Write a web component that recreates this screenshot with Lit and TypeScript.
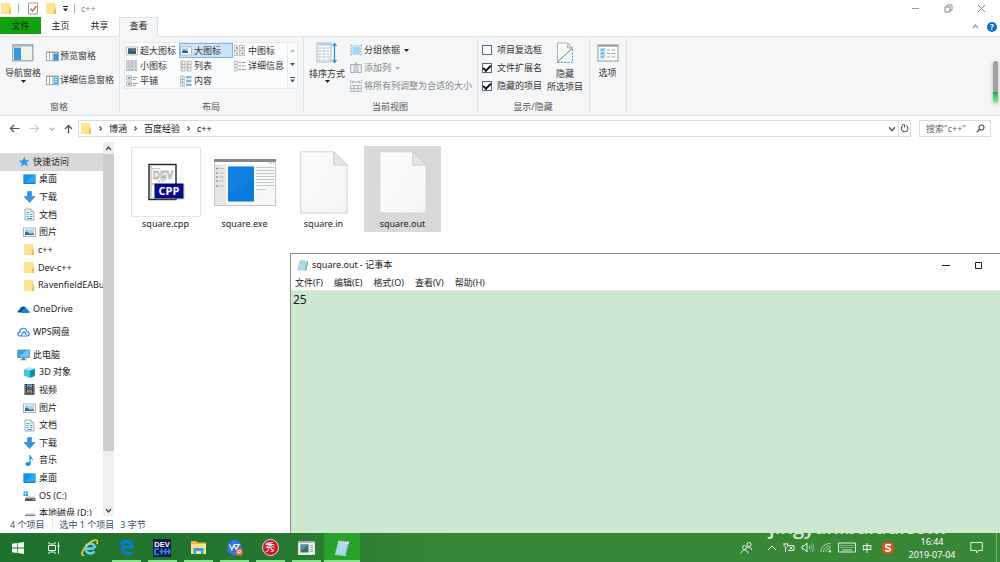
import { LitElement, html, css, svg, TemplateResult } from "lit";
import { customElement, state } from "lit/decorators.js";
import { classMap } from "lit/directives/class-map.js";

const icon = (w: number, h: number, vw: number, vh: number, body: unknown) =>
  html`<svg width=${w} height=${h} viewBox="0 0 ${vw} ${vh}" aria-hidden="true">${body}</svg>`;

const folder = () => icon(12, 13, 12, 13, svg`
  <path d="M1 1h8l1 1v3l1 .5V12H2l-1-.5z" fill="#f6d373"/>
  <path d="M1 1h8v10.2l-6.5.8H1z" fill="#ffe495"/><path d="M9 8l2-1v5H9z" fill="#eebf4c"/>`);

const caret = (color = "#222") => icon(5, 3, 5, 3, svg`<path d="M0 0h5L2.500 3z" fill=${color}/>`);

const chevron = (dir: "up" | "down" | "right", color = "#555", size = 7) => {
  const d = { up: "M1 5l2.500-3L6 5", down: "M1 2l2.500 3L6 2", right: "M2.500 1.500l2 2-2 2" }[dir];
  return icon(size, size, 7, 7, svg`<path d=${d} fill="none" stroke=${color} stroke-width="1.200"/>`);
};

const desktop = () => icon(13, 12, 13, 12, svg`
  <rect x=".8" y="1.800" width="11.400" height="8.600" fill="#1496ee" stroke="#0f86d6" stroke-width=".7"/>
  <path d="M2 10l8-8h2v8z" fill="#2ba9f8"/><path d="M1 10.300h11" stroke="#0a68ad" stroke-width=".8"/>`);
const download = () => icon(13, 12, 13, 12, svg`<path d="M4.500.500h4v5h3.500L6.500 11.500 1 5.500h3.500z" fill="#3a95dc" stroke="#2a7fc5" stroke-width=".6"/>`);
const documentIcon = () => icon(13, 13, 13, 13, svg`
  <path d="M2 1h6l3 3v8H2z" fill="#f7fafc" stroke="#8b979f" stroke-width=".8"/><path d="M8 1v3h3" fill="#dfe5ea" stroke="#8b979f" stroke-width=".6"/>
  <path d="M3.500 4.500h3M3.500 6.500h2M7 6.500h2.500M3.500 8.500h2M7 8.500h2.500M4 10.500h5" stroke="#3f9cd3"/>`);
const picture = () => icon(13, 12, 13, 12, svg`
  <rect x=".5" y="2" width="12" height="8.500" fill="#fff" stroke="#9aa3a9" stroke-width=".8"/>
  <rect x="2" y="3.500" width="9" height="5.500" fill="#a7d2ef"/><path d="M2 6l2-.5L7 8l2-1 2 1v1H2z" fill="#2b6e86"/>`);
const star = () => icon(12, 12, 12, 12, svg`
  <path d="M6.500 1l1.200 3.200 3.600.100L8.600 6.700 10 10.600 6.200 8.500 2.800 10.800 3.800 7 .800 4.700l3.600-.3z" fill="#2f96e0"/>`);
const cloud = () => icon(13, 12, 13, 12, svg`
  <path d="M.500 9.500C.500 7.500 2 7 2.500 6.800 3 3.500 7 2 9.500 5L7 6 4.500 9.500z" fill="#0a4ea0"/>
  <path d="M4.500 10C4 8 5.500 7 6.500 7c1-2.500 4.500-2 4.700.500C13.500 8 13 10 12 10z" fill="#1482d8"/>`);
const wpsCloud = () => icon(13, 12, 13, 12, svg`
  <path d="M3.500 10C.300 10 .200 6.500 2.800 6.200 2.500 1.200 9.500 1 9.800 5.500c3.200.500 3 4.500 0 4.500zM4 9.500l3-4 2.500 3" fill="none" stroke="#3c7cf0" stroke-width="1.200"/>`);
const pc = () => icon(13, 12, 13, 12, svg`
  <rect x=".8" y="1" width="11.500" height="7.500" fill="#28a7f0" stroke="#5c7483" stroke-width=".7"/><path d="M2 8l7-6.500h3V8z" fill="#66c6fb"/>
  <path d="M5 9h3v1.500h2v.8H3v-.8h2z" fill="#71818c"/>`);
const cube = () => icon(13, 13, 13, 13, svg`
  <path d="M1 3.200L6 1l6 1.500-5 2z" fill="#a6ecf5"/><path d="M1 3.200l6 1.300V12l-6-2.200z" fill="#43c2dc"/><path d="M7 4.500l5-2V10l-5 2z" fill="#138fb1"/>`);
const video = () => icon(13, 13, 13, 13, svg`
  <rect x="1.500" y="1" width="10" height="11" fill="#343b43"/><rect x="4" y="1.500" width="5" height="4.700" fill="#7da4d1"/>
  <rect x="4" y="6.800" width="5" height="4.700" fill="#c58845"/><path d="M4 4l2-1 3 2v1H4zM4 10l3-2 2 3H4z" fill="#3d619f"/>
  <path d="M2.700 2v10M10.300 2v10" stroke="#e4e7ea" stroke-width=".9" stroke-dasharray="1 1.200"/>`);
const music = () => icon(13, 13, 13, 13, svg`
  <ellipse cx="5" cy="10" rx="2.600" ry="2" fill="#1593ea"/><path d="M6.400 10V1h1c.3 2.500 3.200 3 2.500 6-.4-1.500-1.300-2-2.300-2.200V10z" fill="#1593ea"/>`);
const drive = (win: boolean) => icon(13, 12, 13, 12, svg`
  ${win ? svg`<path d="M.5 1.500h2v2h-2zM3 1.500h2v2H3zM.5 4h2v2h-2zM3 4h2v2H3z" fill="#19a5e8"/>` : ""}
  <path d="M3 6.500h8.500l1 2H2z" fill="#bfc5c9"/><path d="M2 8.300h10.500V11H2z" fill="#4c5356"/><path d="M9.500 9.700h2" stroke="#63e274"/>`);
const pin = () => icon(9, 9, 9, 9, svg`<path d="M5 .800L8.200 4 7.200 4.400 5.800 6 5.600 7.500 3.700 5.900.800 8.500 3 5.200 1.400 3.400 3 3.200 4.600 1.800z" fill="#8995a0"/>`);

const paneBox = (side: "preview" | "details" | "big") => side === "big"
  ? icon(22, 18, 22, 18, svg`<rect x=".8" y=".8" width="20" height="16" fill="#fff" stroke="#8c979e" stroke-width="1.100"/>
      <path d="M1 2h20" stroke="#8c979e"/><path d="M2 3.500h7V16H2z" fill="#3997dd"/><path d="M10 3.500h10V16H10z" fill="#eef0f2"/>`)
  : icon(13, 11, 13, 11, svg`<rect x=".6" y="1" width="11.800" height="8.800" fill="#fff" stroke="#8b969d" stroke-width=".8"/>
      <path d="M.5 1.500h12M3.500 2v8M7 2v8" stroke="#8b969d" stroke-width=".8"/><rect x="7.500" y="2.500" width="4.500" height="7" fill=${side === "preview" ? "#3997dd" : "#5eb1ea"}/>
      ${side === "details" ? svg`<path d="M8.500 4.500h2.500M8.500 6.500h2.500" stroke="#fff" stroke-width=".8"/>` : ""}`);

const dots = (n: number) => {
  const colors = ["#bb6a4a", "#4d87b5", "#5d9c5a", "#c09a3c"];
  const step = 11 / n;
  return icon(12, 12, 12, 12, svg`${Array.from({ length: n * n }, (_, i) => {
    const x = (i % n) * step + 0.5, y = Math.floor(i / n) * step + 0.5;
    return svg`<rect x=${x} y=${y} width=${step - 0.8} height=${step - 0.8} fill="#fff" stroke="#a4a9ac" stroke-width=".6"/>
      <rect x=${x + step / 3.5} y=${y + step / 3.5} width=${step / 3} height=${step / 3} fill=${colors[(i + Math.floor(i / n)) % 4]}/>`;
  })}`);
};
const thumb = (big: boolean) => icon(12, 12, 12, 12, svg`<rect x=".6" y="2" width="10.800" height="8" fill="#fff" stroke="#9da5aa" stroke-width=".7"/>
  ${big ? svg`<rect x="2" y="3.200" width="8" height="5.600" fill="#3567a8"/><path d="M2 8.800l3-3 2 1.500 3-1v2.500z" fill="#375f37"/><circle cx="7.500" cy="5" r="1.300" fill="#cf5842"/>`
    : svg`<rect x="2" y="3.500" width="6" height="4" fill="#92c5e5"/><path d="M2 7l2-2 4 1.500V8H2z" fill="#25638a"/>`}`);
const rows = (kind: "list" | "details" | "tiles" | "content") => {
  if (kind === "list") return icon(12, 12, 12, 12, svg`<path d="M1 1h4v10H1zM7 1h4v10H7zM1 4.500h4M1 7.500h4M7 4.500h4M7 7.500h4" fill="#fff" stroke="#9ba3a8" stroke-width=".8"/>
    <path d="M2 3h1M2 6h1M2 9h1M8 3h1M8 6h1M8 9h1" stroke="#c07157"/>`);
  if (kind === "details") return icon(12, 12, 12, 12, svg`<path d="M.7 1h2.500v10H.7zM.7 4.500h2.500M.7 7.500h2.500" fill="#fff" stroke="#9ba3a8" stroke-width=".7"/>
    <path d="M4.500 2.500H7M8 2.500h3.500M4.500 6H7M8 6h3.500M4.500 9.500H7M8 9.500h3.500" stroke="#8d98a0"/>`);
  if (kind === "tiles") return icon(12, 12, 12, 12, svg`<path d="M.7 1h5v4h-5zM.7 7h5v4h-5z" fill="#fff" stroke="#98a1a7" stroke-width=".8"/>
    <path d="M2 3h2.500" stroke="#3486bd" stroke-width="1.400"/><path d="M2 9h2.500" stroke="#b6654b" stroke-width="1.400"/><path d="M7 2.500h4.500M7 4.500h2.500M7 8.500h4.500M7 10.500h2.500" stroke="#89949b" stroke-width=".9"/>`);
  return icon(12, 12, 12, 12, svg`<path d="M.7 1h3.500v10H.7zM.7 4.500h3.500M.7 7.500h3.500" fill="#fff" stroke="#98a1a7" stroke-width=".8"/>
    <path d="M2 3h1M2 6h1M2 9h1" stroke="#bd7250"/><path d="M6 2h5.500M6 6h5.500M6 10h5.500" stroke="#5a9ce0" stroke-width="1.400"/><path d="M6 4h5.500M6 8h5.500" stroke="#b8c9d6" stroke-width=".8"/>`);
};
const sortIcon = () => icon(22, 22, 22, 22, svg`<rect x="1" y="1" width="14" height="19" fill="#fff" stroke="#a9b0b5" stroke-width=".9"/>
  <path d="M1.500 1.500h13v2h-13z" fill="#a9cfe6"/><path d="M2 6h12M2 9h12M2 12h12M2 15h12M2 18h12" stroke="#98b9ce" stroke-width="1.200" stroke-dasharray="3.300 1"/>
  <path d="M18.500 2v18M16.500 4l2-2.500 2 2.500M16.500 18l2 2.500 2-2.500" stroke="#2a85cc" stroke-width="1.200" fill="none"/>`);
const groupIcon = () => icon(12, 12, 12, 12, svg`<rect x="2.500" y="2.500" width="7.500" height="7.500" fill="#9ed6f7"/><path d="M1 .5v11M11 .5v11" stroke="#8f999f" stroke-dasharray="2 1"/><path d="M2 1.500h8M2 10.500h8" stroke="#c4d6e0" stroke-width=".8"/>`);
const addCol = () => icon(12, 12, 12, 12, svg`<path d="M.7 2.500h10.600v8H.7zM4.200 2.500v8M7.800 2.500v8" fill="#eef1f5" stroke="#a6aebc"/><path d="M4.500 2.500h3v8h-3z" fill="#c5cfdf"/><path d="M6 0v3" stroke="#8391a6"/>`);
const fitCol = () => icon(12, 12, 12, 12, svg`<path d="M.7 5.500h10.600v6H.7zM4 5.500v6M8 5.500v6M.7 8.500h10.600" fill="#eef1f5" stroke="#a2abb9" stroke-width=".8"/><path d="M.7 0v4M11.300 0v4M2 2h8M3.500.7L2 2l1.500 1.300M8.500.7L10 2 8.500 3.300" fill="none" stroke="#9aa6b6" stroke-width=".8"/>`);
const hideIcon = () => icon(18, 22, 18, 22, svg`<path d="M1.500 1h10l5 5v0L1.500 20z" fill="#f9fafa" stroke="#a6abad" stroke-width=".9"/><path d="M11.500 1v5h5z" fill="#dfe2e4" stroke="#a6abad" stroke-width=".8"/>
  <path d="M1.500 20.500h15V6" fill="none" stroke="#4697ce" stroke-dasharray="2 1.300"/><path d="M1.500 20L16.500 6" stroke="#7d8588" stroke-width=".9"/>`);
const optionsIcon = () => icon(22, 18, 22, 18, svg`<rect x="1" y="1" width="20" height="16" fill="#fff" stroke="#8d969c"/><path d="M1 1.800h20" stroke="#8d969c" stroke-width="1.500"/>
  <rect x="3" y="4" width="5.500" height="11" fill="#bde2f7"/><path d="M4 5.500l1 1 2-2M4 9l1 1 2-2M4 12.500l1 1 2-2" fill="none" stroke="#277fc1" stroke-width=".9"/><path d="M10 6h3m1.500 0h4M10 9.500h3m1.500 0h4M10 13h3m1.500 0h4" stroke="#a1a9ae"/>`);

const cppFile = () => icon(68, 68, 68, 68, svg`<rect x="17" y="16.500" width="27" height="35" fill="#fff" stroke="#222" stroke-width="1.400"/>
  <path d="M19 18v32h24" fill="none" stroke="#cbcbcb" stroke-width="1.600"/>
  <path d="M20 20.500h8" stroke="#aaa" stroke-dasharray="1.500 .8"/><text x="31" y="31" text-anchor="middle" font-family="Liberation Sans" font-size="10" font-weight="700" fill="#f6f6f6" stroke="#7c7c7c" stroke-width=".45">DEV</text>
  <path d="M26 33h7M20 36h4" stroke="#999" stroke-dasharray="2 1"/><rect x="23" y="36" width="28" height="14" fill="#0b0b93" stroke="#05055a"/>
  <path d="M24 50.800h27.800V37" stroke="#777" stroke-width=".8" fill="none"/><text x="37" y="47" text-anchor="middle" font-family="Open Sans" font-size="11" font-weight="700" fill="#fff">CPP</text>`);
const exeFile = () => icon(62, 47, 62, 47, svg`<rect x=".5" y=".5" width="61" height="46" fill="#f7f8f8" stroke="#c4c7c9"/><path d="M0 0h62v3H0z" fill="#83898d"/><path d="M1 3h60v2.500H1z" fill="#fff"/>
  <path d="M1 5.500h11V46H1z" fill="#e5e6e8"/><path d="M55 4h1m1 0h1m1 0h1" stroke="#888"/>
  <path d="M2 9.500h2M2 14h2M2 18h2M2 22h2M2 27h2" stroke="#8d9397" stroke-width="1.500"/><path d="M5 9.500h5M5 14h5M5 18h5M5 22h5M5 27h5" stroke="#bbbfc2" stroke-width=".9"/>
  <rect x="14" y="7.500" width="26" height="35" fill="#087bda"/><path d="M14 7.500h26V22L14 34z" fill="#228be0" opacity=".3"/>
  <path d="M42 8.500h18M42 11.500h18M42 14.500h18M42 17.500h18M42 20.500h18M42 23.500h18M42 26.500h18M42 30.500h10" stroke="#c4c7c9" stroke-width="1"/>`);
const blankFile = () => icon(48, 63, 48, 63, svg`<defs><linearGradient id="paper" x2="1" y2="1"><stop stop-color="#fbfbfb"/><stop offset="1" stop-color="#f3f5f6"/></linearGradient></defs>
  <path d="M.8.8h33L47.200 14v48H.8z" fill="url(#paper)" stroke="#cfd2d4" stroke-width="1"/><path d="M33.800.8V14h13.400z" fill="#e3e5e6" stroke="#c5c8ca" stroke-width=".9"/>`);
const notepadIcon = (s: number) => icon(s, s, 16, 16, svg`<path d="M5 1.500l9.500 1-3 12-10-1z" fill="#8cc8da"/><path d="M5 1.500l9.500 1-.6 2-9.500-1z" fill="#dfe9ec"/><path d="M4.500 4l8 .7-2 8.800-8-.8z" fill="#aadbe8"/>
  <path d="M14.500 2.500l.5 1-2.500 11-1-.2z" fill="#537783"/><path d="M1.500 13.500l10 1 .5.6-10-.8z" fill="#e9f2f3"/><path d="M5.500 2.500h7" stroke="#5e7279" stroke-dasharray="1 1" stroke-width=".8"/>`);

interface App { name: string; glyph: TemplateResult; running?: boolean; active?: boolean }
const apps: App[] = [
  { name: "开始", glyph: icon(14, 14, 14, 14, svg`<path d="M1 2.800l5-.8v4.600H1zM6.700 1.900L13 1v5.600H6.700zM1 7.400h5V12l-5-.8zM6.700 7.400H13V13l-6.300-.9z" fill="#f4faf4"/>`) },
  { name: "任务视图", glyph: icon(14, 14, 14, 14, svg`<path d="M2 1v2h6V1M2 13v-2h6v2M1.500 4.500h7v5h-7zM11.500 1v12" fill="none" stroke="#e3f0e4"/><path d="M10.500 4h2v2h-2z" fill="#e3f0e4"/>`) },
  { name: "Internet Explorer", glyph: icon(18, 18, 18, 18, svg`<path d="M4.800 9.700H13M13.400 12.200A4.900 4.900 0 1 1 14.200 9.200" fill="none" stroke="#64c9f3" stroke-width="2.700"/><path d="M3 16c-3 1.500-2.500-2.500-.5-5.500C5 6 10.500 1.500 14 1c3-.3 2.800 2 1.800 4.200" fill="none" stroke="#f3cf41" stroke-width="1.500"/>`) },
  { name: "Microsoft Edge", running: true, glyph: icon(17, 17, 17, 17, svg`<path d="M1 8C1.500 2.500 5 .8 8.800.8c5 0 7.200 3.700 7 8.700H5.800c0 4 5.500 4.500 9 2.500v3.200c-4.800 2.400-11.600.8-11.600-5.500 0-3 1.700-4.700 3.600-5.500C4.400 4.500 2.300 5.700 1 8zm5-.9h5.500c0-3.700-4.700-3.600-5.500 0z" fill="#087bd2"/>`) },
  { name: "Dev-C++", running: true, glyph: icon(18, 18, 18, 18, svg`<rect width="18" height="18" fill="#121a4d"/><text x="9" y="7.500" text-anchor="middle" font-family="Liberation Sans" font-weight="700" font-size="7.500" fill="#fff">DEV</text><path d="M6 10H2v5.500h4M8.500 9.500v6M12.500 9.500v6M6.500 12.500h8M16 9.500v6M14 12.500h4" fill="none" stroke="#2885ea" stroke-width="1.700"/>`) },
  { name: "文件资源管理器", running: true, glyph: icon(17, 15, 17, 15, svg`<path d="M1 1h5l1.500 1.500H16V14H1z" fill="#eeb94c"/><path d="M1 4h15v10H1z" fill="#fce18c"/><path d="M3.500 14V8h10v6h-2.500v-3H6v3z" fill="#36a2e5"/>`) },
  { name: "WPS", running: true, glyph: icon(17, 17, 17, 17, svg`<path d="M8.500.5l6.500 4v8l-6.500 4-6.500-4v-8z" fill="#3275eb" stroke="#3275eb" stroke-linejoin="round"/><path d="M3.500 5.500l2.300 5L8 6l2.200 4.500 3-5H8" fill="none" stroke="#fff" stroke-width="1.200"/><rect x="10" y="10" width="6.500" height="6.500" rx="1" fill="#f06b3b"/><path d="M12 15v-3.500h2.500v2H12" fill="none" stroke="#fff" stroke-width=".8"/>`) },
  { name: "美图秀秀", running: true, glyph: html`<span class="seal">秀</span>` },
  { name: "程序", running: true, glyph: icon(17, 14, 17, 14, svg`<rect x=".5" y=".5" width="16" height="13" fill="#eef1f1" stroke="#dce0e0"/><path d="M0 1h17" stroke="#9ba3a5" stroke-width="1.500"/><path d="M2.500 3.500h8v8h-8z" fill="#39725f"/><path d="M2.500 3.500h8l-8 7z" fill="#58939c"/><path d="M12 4.500h3M12 6.500h3M12 8.500h3M12 10.500h3" stroke="#8f9a9c" stroke-width=".8"/>`) },
  { name: "记事本", running: true, active: true, glyph: notepadIcon(18) },
];

const quick: [string, TemplateResult, boolean][] = [
  ["桌面", desktop(), true], ["下载", download(), true], ["文档", documentIcon(), true], ["图片", picture(), true],
  ["c++", folder(), false], ["Dev-c++", folder(), false], ["RavenfieldEABuild", folder(), false],
];
const computer: [string, TemplateResult][] = [
  ["3D 对象", cube()], ["视频", video()], ["图片", picture()], ["文档", documentIcon()], ["下载", download()],
  ["音乐", music()], ["桌面", desktop()], ["OS (C:)", drive(true)], ["本地磁盘 (D:)", drive(false)],
];
const layouts: [string, TemplateResult][] = [
  ["超大图标", thumb(true)], ["大图标", thumb(false)], ["中图标", dots(2)],
  ["小图标", dots(3)], ["列表", rows("list")], ["详细信息", rows("details")],
  ["平铺", rows("tiles")], ["内容", rows("content")],
];

@customElement("app-root")
export class AppRoot extends LitElement {
  @state() private layout = "大图标";
  @state() private selected = "square.out";

  static styles = css`
    :host { display: flex; flex-direction: column; position: relative; height: 100vh; overflow: hidden; background: #fff; color: #1c1c1c;
      font: 9px/12px "Noto Sans", "Noto Sans CJK SC", sans-serif; }
    * { box-sizing: border-box; }
    svg { display: block; flex: none; }
    button, input, textarea { font: inherit; color: inherit; margin: 0; padding: 0; border: 0; background: none; border-radius: 0; }
    button { white-space: nowrap; }
    a { color: inherit; text-decoration: none; }
    .title { display: flex; align-items: center; height: 17px; color: #8a8a8a; }
    .quickbar { display: flex; align-items: center; gap: 6px; flex: 1; }
    .quickbar button { display: flex; }
    .quickbar .lead { margin-left: 2px; }
    .bar { width: 1px; height: 9px; background: #b5b5b5; }
    .winctl { display: flex; }
    .winctl button { width: 33px; height: 15px; display: grid; place-items: center; }
    .title .winctl { padding-right: 2px; }
    .tabs { display: flex; align-items: center; height: 20px; border-bottom: 1px solid #dfe1e3; }
    .tabs button { height: 17px; width: 39px; align-self: flex-start; }
    .tabs .file { width: 41px; background: #13a10e; color: #062c05; }
    .tabs .current { height: 20px; border: 1px solid #dfe1e3; border-bottom: 0; background: #f5f6f7; padding-bottom: 3px; }
    .grow { flex: 1; }
    .tabs .round { display: grid; place-items: center; width: 10px; height: 10px; margin: 0 3px 0 8px; align-self: center; border-radius: 50%; background: #0a6fc9; color: #fff; font-weight: 700; font-size: 8px; line-height: 10px; }
    .tabs .fold { width: 8px; display: grid; place-items: center; align-self: center; }
    .ribbon { position: relative; display: flex; height: 79px; background: #f5f6f7; border-bottom: 1px solid #dfe1e3; color: #333; }
    .group { display: flex; flex-direction: column; justify-content: space-between; margin: 1px 0 2px; padding: 4px 5px 0 4px; border-right: 1px solid #e0e2e4; }
    .body { display: flex; gap: 4px; }
    .caption { text-align: center; color: #555; }
    .big { display: flex; flex-direction: column; align-items: center; width: 38px; padding-top: 2px; line-height: 13px; gap: 4px; }
    .big.tall { padding-top: 0; gap: 3px; }
    .big span + svg { margin-top: -3px; }
    .options .big { width: 27px; }
    .stack { display: flex; flex-direction: column; gap: 6px; padding-top: 2px; }
    .stack.two { gap: 12px; padding-top: 8px; }
    .stack.two button { gap: 1px; }
    .stack button, .stack label { display: flex; align-items: center; gap: 2px; height: 12px; }
    .stack button > span + svg { margin-left: 2px; }
    .stack.checks { width: 60px; }
    .stack.checks label { gap: 5px; white-space: nowrap; }
    .off { color: #83878b; }
    input[type="checkbox"] { appearance: none; width: 10px; height: 10px; border: 1px solid #52688b; background: #fff; flex: none; }
    input[type="checkbox"]:checked { display: grid; place-items: center; }
    input[type="checkbox"]:checked::before { content: ""; width: 6px; height: 3px; border: solid #111; border-width: 0 0 2px 2px; transform: rotate(-45deg); margin-bottom: 2px; }
    .gallery { display: flex; border: 1px solid #e6e9ec; background: #fbfcfd; }
    .cells { display: grid; grid-template-columns: repeat(3, 54px); grid-auto-rows: 15px; }
    .cells button { display: flex; align-items: center; gap: 2px; border: 1px solid transparent; }
    .cells .chosen { background: #cce4fa; border-color: #7fb4e6; }
    .steps { display: flex; flex-direction: column; justify-content: space-around; width: 10px; border-left: 1px solid #e6e9ec; }
    .steps button { display: grid; place-items: center; }
    .meter { position: absolute; right: 2px; top: 24px; width: 5px; height: 42px; border-radius: 3px; background: linear-gradient(#a2a2a2 74%, #219c55 75%, #39c768 82%, #7bf28b); box-shadow: 0 1px 4px #bbb; }
    .address { display: flex; align-items: center; gap: 8px; height: 25px; padding: 0 9px; }
    .nav { display: flex; align-items: center; justify-content: space-between; width: 64px; margin-right: -3px; }
    .nav button { display: flex; }
    .path { display: flex; align-items: center; flex: 1; height: 17px; border: 1px solid #dcdcdc; padding-left: 1px; gap: 5px; color: #111; }
    .path .spacer { flex: 1; }
    .path button { display: grid; place-items: center; width: 12px; }
    .path button:last-child { border-left: 1px solid #dcdcdc; }
    .ends { display: flex; align-self: stretch; }
    .search { display: flex; align-items: center; width: 72px; height: 17px; border: 1px solid #dcdcdc; padding: 0 5px 0 6px; }
    .search input { flex: 1; min-width: 0; outline: 0; }
    .search input::placeholder { color: #666; opacity: 1; }
    .main { display: flex; flex: 1; min-height: 0; }
    .tree { width: 103px; overflow: hidden; padding-top: 12px; display: flex; flex-direction: column; gap: 6px; white-space: nowrap; }
    .branch { display: grid; grid-auto-rows: 1fr; flex: none; }
    .branch.quick { height: 141px; }
    .branch.solo { height: 17px; }
    .branch.pc { height: 176px; }
    .branch a { display: flex; align-items: center; gap: 3px; padding-left: 23px; }
    .branch a.root { padding-left: 17px; }
    .branch a.here { background: #d9d9d9; padding-left: 18px; }
    .branch a span { flex: 1; }
    .branch a svg:last-child { margin-right: 3px; }
    .scroll { width: 11px; background: #f0f0f0; display: flex; flex-direction: column; margin-top: 1px; }
    .scroll button { height: 12px; display: grid; place-items: center; }
    .thumb { flex: 297; background: #cdcdcd; }
    .rest { flex: 53; }
    .files { flex: 1; display: flex; align-items: flex-start; gap: 2px; padding: 5px 13px; }
    .item { width: 77px; height: 86px; display: flex; flex-direction: column; align-items: center; justify-content: space-between; padding-bottom: 2px; }
    .item.sel { background: #d9d9d9; }
    .item div { flex: 1; display: grid; place-items: center; }
    .item .framed { border: 1px solid #e4e4e4; flex: none; margin-top: 1px; }
    .status { display: flex; align-items: center; height: 17px; padding: 0 10px; color: #3b4e70; }
    .status span { padding-right: 6px; }
    .status span:first-child { padding-right: 7px; margin-right: 7px; border-right: 1px solid #ebebeb; }
    .notepad { position: absolute; left: 290px; top: 253px; right: 0; bottom: 29px; display: flex; flex-direction: column; border: solid #8e8e8e; border-width: 1px 0 0 1px; background: #fff; }
    .notepad header { display: flex; align-items: center; gap: 3px; height: 22px; padding-left: 5px; padding-right: 5px; }
    .notepad menu { display: flex; gap: 11px; margin: 0; padding: 0 4px; height: 14px; align-items: center; }
    .notepad textarea { flex: 1; resize: none; outline: 0; background: #cce8cf; padding: 0 2px; font-size: 12px; line-height: 17px; border-top: 1px solid #dcebdd; }
    .taskbar { position: relative; display: flex; height: 29px; overflow: hidden; background: linear-gradient(90deg, #1f722e, #24752f 25%, #378737 45%, #378737); color: #fff; }
    .app { width: 36px; display: grid; place-items: center; }
    .app.running { background: linear-gradient(#85df87, #85df87) center bottom / 29px 2px no-repeat; }
    .app.active { background: linear-gradient(#85df87, #85df87) center bottom / 36px 2px no-repeat #28a228; }
    .seal { width: 17px; height: 17px; border-radius: 50%; border: 1px solid #f4d9dc; background: #cb1732; color: #fff; font-size: 10px; line-height: 15px; }
    .watermark { position: absolute; right: 54px; bottom: 22px; font: 600 20px/26px "Open Sans", sans-serif; color: #d4e8d4; }
    .tray { display: flex; align-items: center; margin-left: auto; gap: 6px; position: relative; }
    .tray button { display: grid; place-items: center; }
    .tray .people { margin-right: 8px; }
    .tray .ime { font-size: 10px; }
    .tray .sogou { margin: 0 4px; }
    .clock { width: 56px; line-height: 13px; }
    .tray .note { margin-left: 1px; margin-right: 4px; padding: 0 3px; }
    .peek { width: 4px; align-self: stretch; border-left: 1px solid #7bb07b; }
  `;

  private check(label: string, on: boolean) {
    return html`<label><input type="checkbox" .checked=${on} />${label}</label>`;
  }

  private file(name: string, glyph: TemplateResult, framed = false) {
    return html`<button class=${classMap({ item: true, sel: this.selected === name })} @click=${() => (this.selected = name)}>
      <div class=${classMap({ framed })}>${glyph}</div><span>${name}</span></button>`;
  }

  render() {
    return html`
      <header class="title">
        <div class="quickbar">
          ${folder()}<span class="bar"></span>
          <button class="lead" aria-label="属性">${icon(12, 13, 12, 13, svg`<path d="M1.500 1h9v11h-9z" fill="#fff" stroke="#999"/><path d="M3.500 6.500l2 2.500 4-5" fill="none" stroke="#df6543" stroke-width="1.500"/>`)}</button>
          <button aria-label="新建文件夹">${folder()}</button>
          <button aria-label="自定义">${icon(5, 6, 5, 6, svg`<path d="M0 .5h5" stroke="#222"/><path d="M0 2.500h5L2.500 5.500z" fill="#222"/>`)}</button>
          <span class="bar"></span><span>c++</span>
        </div>
        <div class="winctl">
          <button aria-label="最小化">${icon(9, 9, 9, 9, svg`<path d="M1 4.500h7" stroke="#999"/>`)}</button>
          <button aria-label="还原">${icon(9, 9, 9, 9, svg`<path d="M1 3h5v5H1zM3 3V1h5v5H6" fill="none" stroke="#888"/>`)}</button>
          <button aria-label="关闭">${icon(9, 9, 9, 9, svg`<path d="M1 1l7 7M8 1L1 8" stroke="#888"/>`)}</button>
        </div>
      </header>
      <nav class="tabs">
        <button class="file">文件</button><button>主页</button><button>共享</button><button class="current">查看</button>
        <span class="grow"></span>
        <button class="fold" aria-label="折叠功能区">${chevron("up", "#999")}</button><button class="round" aria-label="帮助">?</button>
      </nav>
      <section class="ribbon">
        <div class="group">
          <div class="body">
            <button class="big">${paneBox("big")}<span>导航窗格</span>${caret()}</button>
            <div class="stack two"><button>${paneBox("preview")}<span>预览窗格</span></button><button>${paneBox("details")}<span>详细信息窗格</span></button></div>
          </div>
          <div class="caption">窗格</div>
        </div>
        <div class="group">
          <div class="gallery">
            <div class="cells">
              ${layouts.map(([name, glyph]) => html`<button class=${classMap({ chosen: this.layout === name })} @click=${() => (this.layout = name)}>${glyph}<span>${name}</span></button>`)}
            </div>
            <div class="steps"><button aria-label="上一行">${icon(5, 3, 5, 3, svg`<path d="M0 3h5L2.500 0z" fill="#b5b5b5"/>`)}</button><button aria-label="下一行">${caret("#44546a")}</button>
              <button aria-label="更多">${icon(5, 6, 5, 6, svg`<path d="M0 .5h5" stroke="#44546a"/><path d="M0 2.500h5L2.500 5.500z" fill="#44546a"/>`)}</button></div>
          </div>
          <div class="caption">布局</div>
        </div>
        <div class="group">
          <div class="body">
            <button class="big tall">${sortIcon()}<span>排序方式</span>${caret()}</button>
            <div class="stack"><button>${groupIcon()}<span>分组依据</span>${caret()}</button><button class="off">${addCol()}<span>添加列</span>${caret("#aaa")}</button>
              <button class="off">${fitCol()}<span>将所有列调整为合适的大小</span></button></div>
          </div>
          <div class="caption">当前视图</div>
        </div>
        <div class="group">
          <div class="body">
            <div class="stack checks">${this.check("项目复选框", false)}${this.check("文件扩展名", true)}${this.check("隐藏的项目", true)}</div>
            <button class="big tall">${hideIcon()}<span>隐藏<br />所选项目</span></button>
          </div>
          <div class="caption">显示/隐藏</div>
        </div>
        <div class="group options"><button class="big">${optionsIcon()}<span>选项</span></button></div>
        <div class="meter"></div>
      </section>
      <div class="address">
        <div class="nav">
          <button aria-label="后退">${icon(11, 9, 11, 9, svg`<path d="M10.500 4.500H1.500M5 1L1.500 4.500 5 8" fill="none" stroke="#555" stroke-width="1.200"/>`)}</button>
          <button aria-label="前进">${icon(11, 9, 11, 9, svg`<path d="M.5 4.500h9M6 1l3.500 3.500L6 8" fill="none" stroke="#d0d0d0" stroke-width="1.200"/>`)}</button>
          <button aria-label="最近">${chevron("down", "#999", 6)}</button>
          <button aria-label="上移">${icon(9, 10, 9, 10, svg`<path d="M4.500 9.500v-8M1 5l3.500-3.500L8 5" fill="none" stroke="#555" stroke-width="1.300"/>`)}</button>
        </div>
        <div class="path">${folder()}${chevron("right")}<a href="#">博涵</a>${chevron("right")}<a href="#">百度经验</a>${chevron("right")}<a href="#">c++</a>
          <span class="spacer"></span>
          <span class="ends"><button aria-label="历史">${chevron("down", "#555", 8)}</button><button aria-label="刷新">${icon(9, 9, 9, 9, svg`<path d="M6.500 1.800A3.300 3.300 0 1 1 2.500 2M2 .8h2.500v2.700" fill="none" stroke="#555" stroke-width="1.100"/>`)}</button></span>
        </div>
        <label class="search"><input type="text" aria-label="搜索" placeholder='搜索"c++"' />${icon(9, 9, 9, 9, svg`<circle cx="5.500" cy="3.500" r="2.500" fill="none" stroke="#555" stroke-width="1.200"/><path d="M3.500 5.500L.8 8.200" stroke="#555" stroke-width="1.400"/>`)}</label>
      </div>
      <div class="main">
        <nav class="tree">
          <div class="branch quick"><a class="root here" href="#">${star()}<span>快速访问</span></a>
            ${quick.map(([n, g, p]) => html`<a href="#">${g}<span>${n}</span>${p ? pin() : ""}</a>`)}</div>
          <div class="branch solo"><a class="root" href="#">${cloud()}<span>OneDrive</span></a></div>
          <div class="branch solo"><a class="root" href="#">${wpsCloud()}<span>WPS网盘</span></a></div>
          <div class="branch pc"><a class="root" href="#">${pc()}<span>此电脑</span></a>
            ${computer.map(([n, g]) => html`<a href="#">${g}<span>${n}</span></a>`)}</div>
        </nav>
        <div class="scroll"><button aria-label="向上滚动">${chevron("up", "#444")}</button><div class="thumb"></div><div class="rest"></div><button aria-label="向下滚动">${chevron("down", "#444")}</button></div>
        <div class="files">
          ${this.file("square.cpp", cppFile(), true)}${this.file("square.exe", exeFile())}${this.file("square.in", blankFile())}${this.file("square.out", blankFile())}
        </div>
      </div>
      <footer class="status"><span>4 个项目</span><span>选中 1 个项目</span><span>3 字节</span></footer>
      <section class="notepad">
        <header>${notepadIcon(13)}<span class="grow">square.out - 记事本</span>
          <div class="winctl"><button aria-label="最小化">${icon(9, 9, 9, 9, svg`<path d="M1 4.500h8" stroke="#222"/>`)}</button>
            <button aria-label="最大化">${icon(9, 9, 9, 9, svg`<path d="M1.500 1.500h6v6h-6z" fill="none" stroke="#222"/>`)}</button></div></header>
        <menu>${["文件(F)", "编辑(E)", "格式(O)", "查看(V)", "帮助(H)"].map((m) => html`<button>${m}</button>`)}</menu>
        <textarea aria-label="文本" spellcheck="false" .value=${"25"}></textarea>
      </section>
      <div class="taskbar">
        ${apps.map((a) => html`<button class=${classMap({ app: true, running: !!a.running, active: !!a.active })} aria-label=${a.name}>${a.glyph}</button>`)}
        <span class="watermark">jingyan.baidu.com</span>
        <div class="tray">
          <button class="people" aria-label="人脉">${icon(13, 13, 13, 13, svg`<circle cx="9" cy="3.500" r="2" fill="none" stroke="#e6f2e6"/><path d="M7 7c1.500-1.500 4.500-1 4.800 2" fill="none" stroke="#e6f2e6"/><circle cx="4.500" cy="6.500" r="2" fill="none" stroke="#e6f2e6"/><path d="M1 12.500C1.500 8 7.500 8 8 12.500" fill="none" stroke="#e6f2e6"/>`)}</button>
          <button aria-label="显示隐藏的图标">${icon(10, 8, 10, 8, svg`<path d="M1 6l4-4 4 4" fill="none" stroke="#fff"/>`)}</button>
          <button aria-label="电源">${icon(12, 11, 12, 11, svg`<path d="M5 3.500h6v5H5M2.500 6v4M1 1v2.500c0 3 3.500 3 3.500 0V1M1 2h3.500M6.500 4.500l3 3M9.500 4.500l-3 3" fill="none" stroke="#e6f2e6"/>`)}</button>
          <button aria-label="音量">${icon(13, 11, 13, 11, svg`<path d="M1 4h2l3-3v9L3 7H1zM8 4c1 1 1 2 0 3" fill="none" stroke="#e6f2e6"/><path d="M9.500 2.500c2 2 2 4 0 6M11 1c2.500 2.500 2.500 6.500 0 9" fill="none" stroke="#8fbe8f"/>`)}</button>
          <button aria-label="网络">${icon(12, 11, 12, 11, svg`<path d="M1 10C1 5 5 1.500 10.500 1.500M3.500 10c0-3.500 3-6 7-6M6 10c0-2.500 2-4 4.500-4M8.500 10c0-1.200 1-2 2-2" fill="none" stroke="#b9d9b9"/><circle cx="10" cy="9.500" r="1" fill="#fff"/>`)}</button>
          <button aria-label="键盘">${icon(18, 11, 18, 11, svg`<path d="M.5 1h17v9H.5z" fill="none" stroke="#e6f2e6"/><path d="M2.500 3.500h13M2.500 5.500h13" stroke="#d0e5d0" stroke-dasharray="1 1"/><path d="M4 8h10" stroke="#d0e5d0"/>`)}</button>
          <button class="ime" aria-label="中文输入">中</button>
          <button class="sogou" aria-label="搜狗输入法">${icon(12, 12, 12, 12, svg`<rect x=".5" y=".5" width="11" height="11" rx="2" fill="#f14b1c"/><path d="M9 3.300C6.500 2 3.500 2.500 3.500 4.200c0 2 5 1.300 5 3.200S5.500 9.500 3 8.300" fill="none" stroke="#fff" stroke-width="1.700"/>`)}</button>
          <button class="clock">16:44<br />2019-07-04</button>
          <button class="note" aria-label="通知">${icon(13, 13, 13, 13, svg`<path d="M.8 1.500h11.500v8H8.500l-2 2.500v-2.500H.8z" fill="none" stroke="#e6f2e6"/>`)}</button>
          <span class="peek"></span>
        </div>
      </div>`;
  }
}
